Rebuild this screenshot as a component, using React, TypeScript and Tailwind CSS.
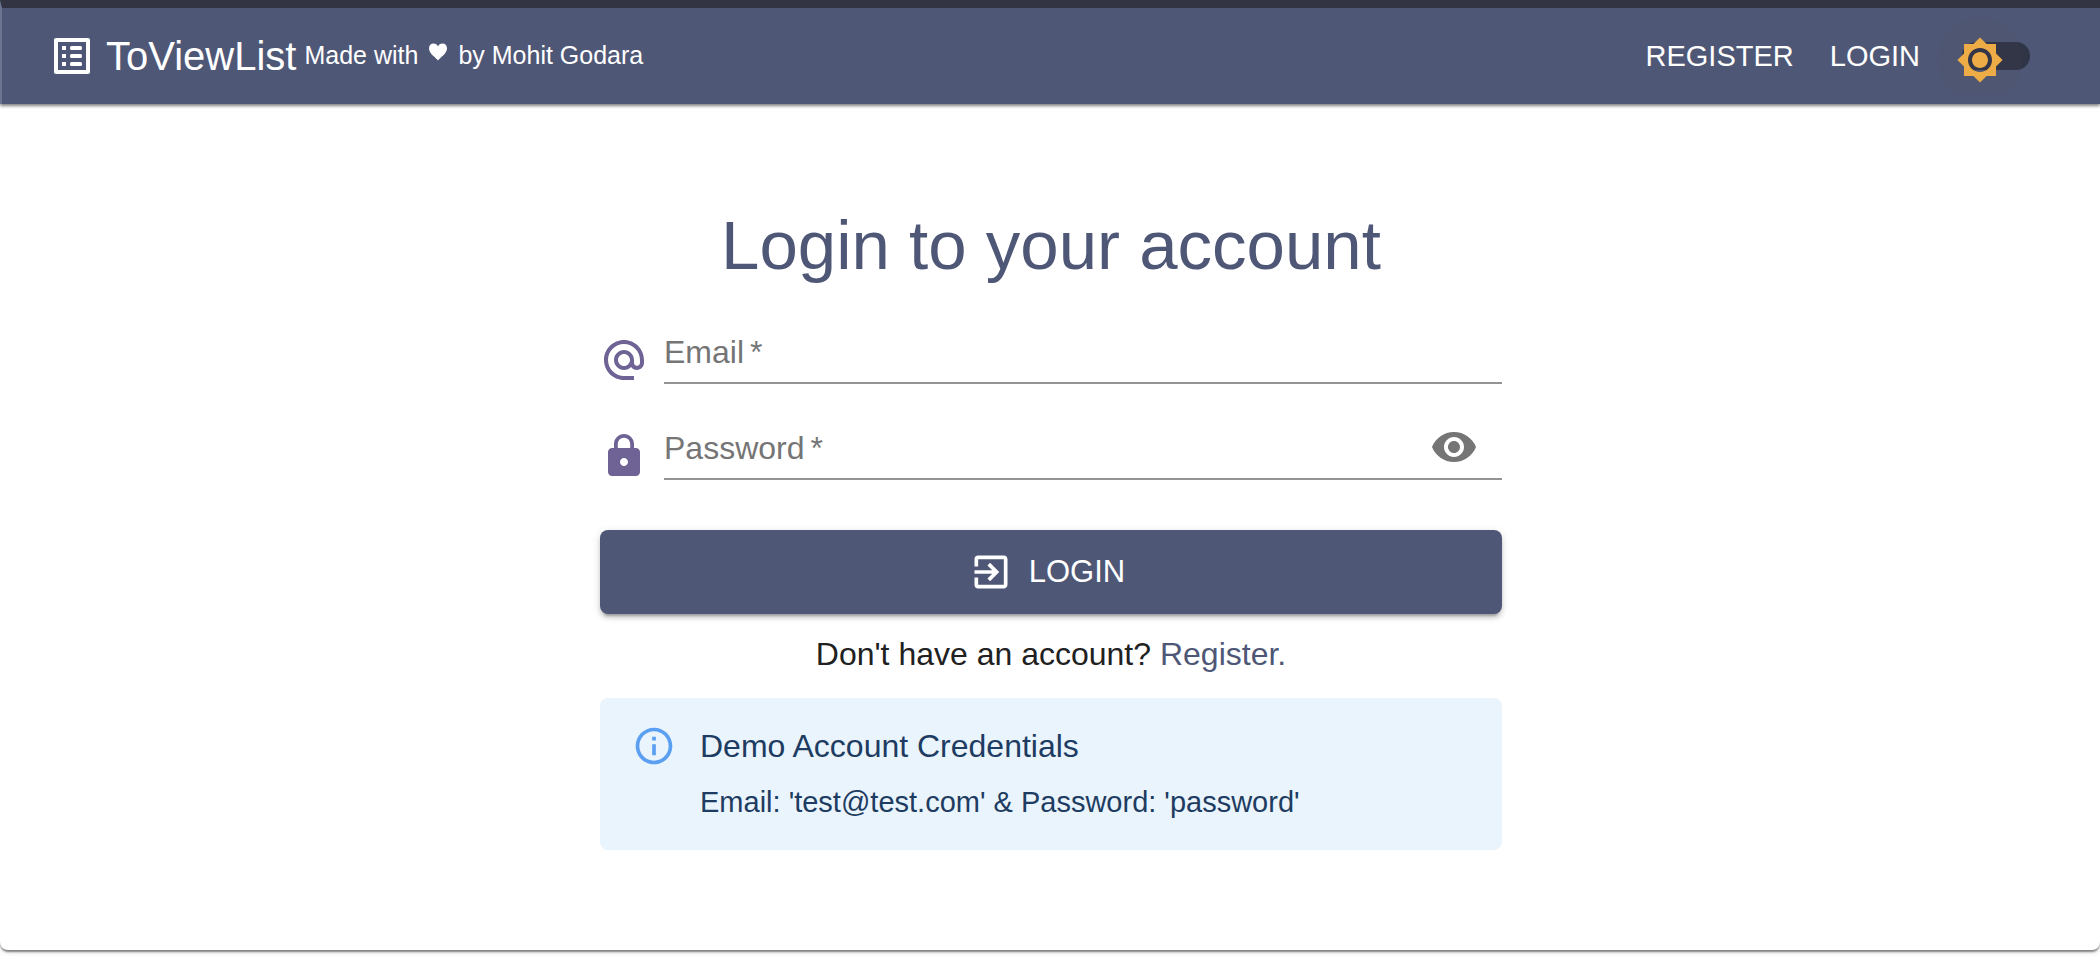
import { useState } from 'react';
import {
  MdAlternateEmail,
  MdBrightness7,
  MdExitToApp,
  MdInfoOutline,
  MdLock,
  MdVisibility,
  MdVisibilityOff,
} from 'react-icons/md';

function ListLogo() {
  return (
    <svg viewBox="0 0 48 48" className="size-12 fill-current" aria-hidden="true">
      <path
        fillRule="evenodd"
        d="M8 6h32c1.100 0 2 .9 2 2v32c0 1.100-.9 2-2 2H8c-1.100 0-2-.9-2-2V8c0-1.100.9-2 2-2zM10 10v28h28V10z"
      />
      <path d="M14 14h4v4h-4zM14 22h4v4h-4zM14 30h4v4h-4z" />
      <rect x="22" y="14" width="12" height="4" rx="1.500" />
      <rect x="22" y="22" width="12" height="4" rx="1.500" />
      <rect x="22" y="30" width="12" height="4" rx="1.500" />
    </svg>
  );
}

function ThemeSwitch() {
  return (
    <label className="relative flex h-[76px] w-[116px] cursor-pointer items-center justify-center overflow-hidden">
      <input type="checkbox" role="switch" aria-label="Toggle dark mode" className="peer sr-only" />
      <span className="h-7 w-[68px] rounded-full bg-[#303447]" />
      <span className="absolute top-0 left-0 flex size-[84px] items-center justify-center rounded-full bg-[#4d4d4d]/10 text-[#edac46] peer-checked:left-8">
        <MdBrightness7 className="size-12" />
      </span>
    </label>
  );
}

function Header() {
  return (
    <header className="relative z-10 flex min-h-[104px] flex-wrap items-center justify-between border-t-8 border-l-2 border-t-[#323443] border-l-[#6c7590] bg-[#4f5776] pr-[46px] pl-[46px] text-white shadow-[0_2px_3px_rgba(0,0,0,0.5)]">
      <div className="flex items-center">
        <a href="#home" className="flex items-center gap-2.5">
          <ListLogo />
          <span className="text-[40px] leading-12">ToViewList</span>
        </a>
        <a href="#author" className="mb-0.5 ml-2 flex items-center gap-2.5 text-[25px] leading-8">
          <span>Made with</span>
          <svg viewBox="0 0 19 18" className="mb-1.5 h-[18px] w-5 fill-white" role="img" aria-label="love">
            <path d="M9.500 17.500 C7 14 .5 10.500 .5 5.400 C.5 2.500 2.500 .6 5 .6 C7.200 .6 8.800 1.900 9.500 3.500 C10.200 1.900 11.800 .6 14 .6 C16.500 .6 18.500 2.500 18.500 5.400 C18.500 10.500 12 14 9.500 17.500 Z" />
          </svg>
          <span>by Mohit Godara</span>
        </a>
      </div>
      <nav className="flex items-center">
        <a href="#register" className="px-[18px] text-[29px] leading-9">REGISTER</a>
        <a href="#login" className="px-[18px] text-[29px] leading-9">LOGIN</a>
        <ThemeSwitch />
      </nav>
    </header>
  );
}

interface FieldProps {
  id: string;
  label: string;
  type: string;
  icon: React.ReactNode;
  action?: React.ReactNode;
}

function Field({ id, label, type, icon, action }: FieldProps) {
  const [value, setValue] = useState('');
  return (
    <div className="flex items-end gap-4">
      <span className="text-[#6f6395]">{icon}</span>
      <div className="relative flex h-16 flex-1 items-center border-b-2 border-[#949494]">
        <label
          htmlFor={id}
          className={
            value
              ? 'sr-only'
              : 'pointer-events-none absolute top-3 left-0 text-[32px] leading-10 text-[#757575]'
          }
        >
          {label}
          <span aria-hidden="true" className="ml-1.5">*</span>
        </label>
        <input
          id={id}
          type={type}
          required
          value={value}
          onChange={(event) => setValue(event.target.value)}
          className="h-full min-w-0 flex-1 bg-transparent text-[32px] text-[#212121] outline-none"
        />
        {action}
      </div>
    </div>
  );
}

function LoginForm() {
  const [visible, setVisible] = useState(false);
  return (
    <form className="flex w-full max-w-[902px] flex-col" onSubmit={(event) => event.preventDefault()}>
      <h1 className="text-center text-[69px] leading-20 text-[#4f5776]">Login to your account</h1>
      <div className="mt-[34px] flex flex-col gap-8">
        <Field id="email" label="Email" type="email" icon={<MdAlternateEmail className="size-12" />} />
        <Field
          id="password"
          label="Password"
          type={visible ? 'text' : 'password'}
          icon={<MdLock className="size-12" />}
          action={
            <button
              type="button"
              aria-label="Show password"
              onClick={() => setVisible(!visible)}
              className="mr-6 text-[#757575]"
            >
              {visible ? <MdVisibilityOff className="size-12" /> : <MdVisibility className="size-12" />}
            </button>
          }
        />
      </div>
      <button
        type="submit"
        className="mt-[50px] flex h-[84px] items-center justify-center gap-4 rounded-lg bg-[#4f5776] pr-2 text-[31px] leading-10 text-white shadow-[0_6px_2px_-4px_rgba(0,0,0,0.2),0_4px_4px_rgba(0,0,0,0.14),0_2px_10px_rgba(0,0,0,0.12)]"
      >
        <MdExitToApp className="size-11" />
        LOGIN
      </button>
      <p className="mt-5 text-center text-[32px] leading-10 text-[#212121]">
        Don't have an account?{' '}
        <a href="#register" className="text-[#4f5776]">Register.</a>
      </p>
      <section className="mt-6 flex gap-6 rounded-lg bg-[#e9f4fd] px-8 pt-6 pb-7 text-[#1e3c61]">
        <MdInfoOutline className="mt-0.5 size-11 shrink-0 text-[#5a9ff2]" />
        <div>
          <h2 className="text-[32px] leading-12">Demo Account Credentials</h2>
          <p className="mt-3 text-[29px] leading-10">Email: 'test@test.com' &amp; Password: 'password'</p>
        </div>
      </section>
    </form>
  );
}

export default function App() {
  return (
    <div className="min-h-screen bg-white font-['Liberation_Sans',Arial,sans-serif]">
      <Header />
      <main className="flex justify-center rounded-b-lg bg-white pt-[102px] pr-6 pb-[100px] pl-[26px] shadow-[0_4px_2px_-2px_rgba(0,0,0,0.2),0_2px_2px_rgba(0,0,0,0.3),0_2px_6px_rgba(0,0,0,0.12)]">
        <LoginForm />
      </main>
    </div>
  );
}
